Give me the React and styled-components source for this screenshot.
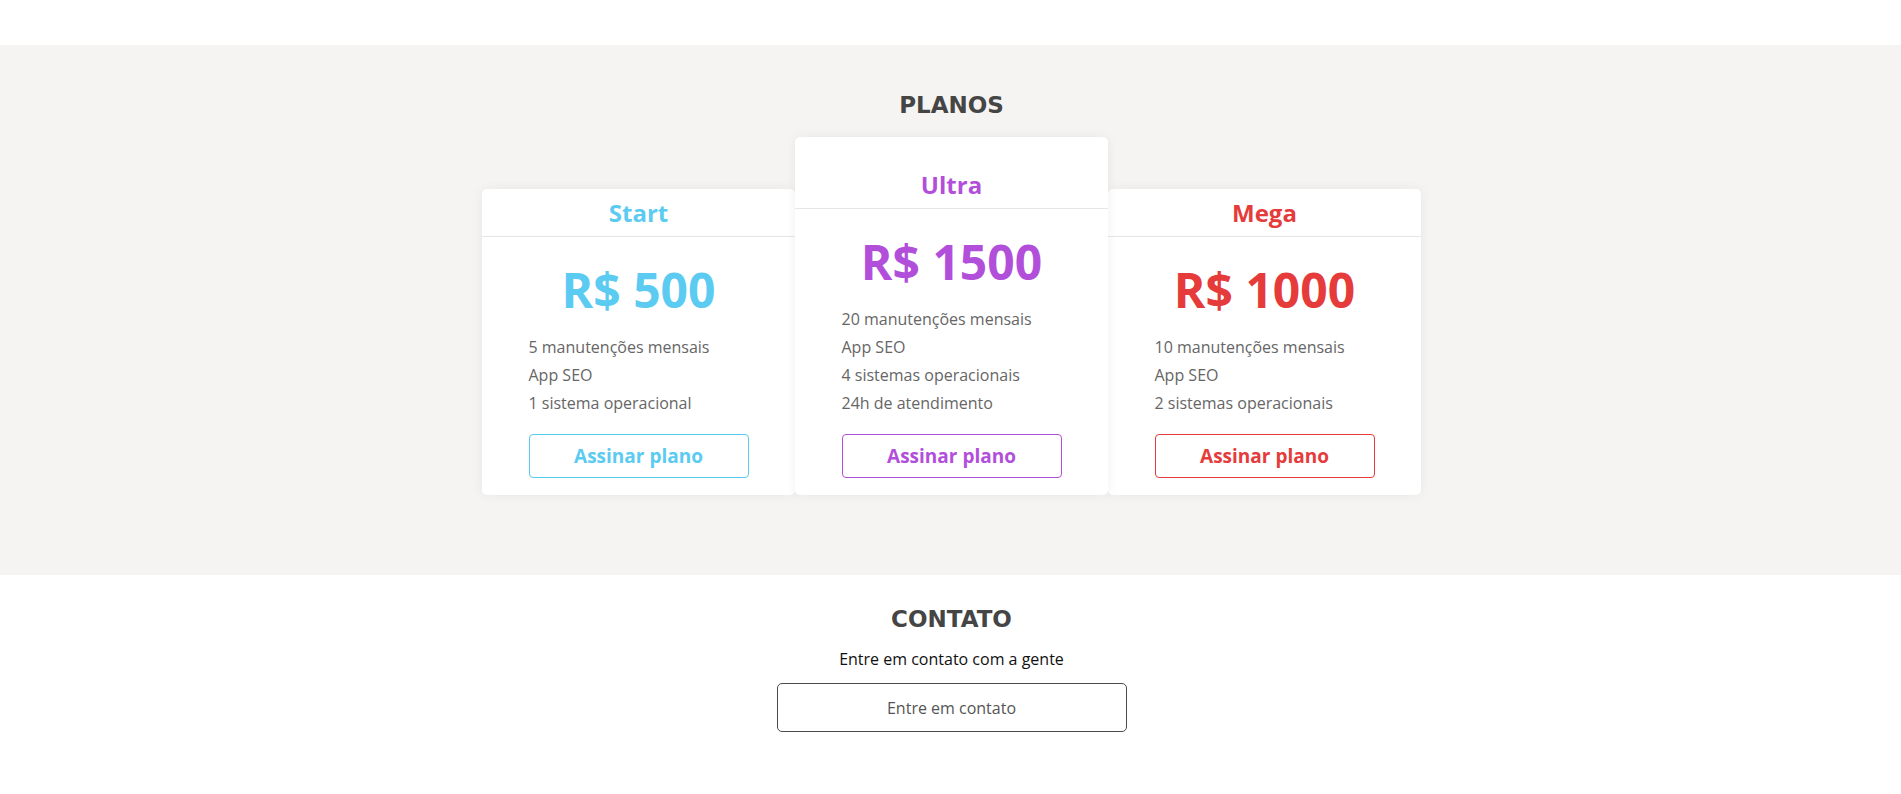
import styled, { createGlobalStyle } from "styled-components"

const GlobalStyle = createGlobalStyle`
    *{
        box-sizing: border-box;
    }
    body{
        margin: 0;
        background: #FFFFFF;
        font-family: "Open Sans", "Liberation Sans", sans-serif;
    }
`

const plans = [
    {
        name: "Start",
        price: "R$ 500",
        color: "#5BCBF1",
        items: ["5 manutenções mensais", "App SEO", "1 sistema operacional"],
    },
    {
        name: "Ultra",
        price: "R$ 1500",
        color: "#B24FDA",
        featured: true,
        items: ["20 manutenções mensais", "App SEO", "4 sistemas operacionais", "24h de atendimento"],
    },
    {
        name: "Mega",
        price: "R$ 1000",
        color: "#E53B3B",
        items: ["10 manutenções mensais", "App SEO", "2 sistemas operacionais"],
    },
]

export default function App(){
    return(
        <>
            <GlobalStyle/>
            <TopBar/>
            <Plans>
                <Title>PLANOS</Title>
                <CardRow>
                    {plans.map((plan) => (
                        <Card key={plan.name} featured={plan.featured}>
                            <CardHeader featured={plan.featured}>
                                <PlanName color={plan.color}>{plan.name}</PlanName>
                            </CardHeader>
                            <CardBody>
                                <Price color={plan.color}>{plan.price}</Price>
                                <Features>
                                    {plan.items.map((item) => (
                                        <li key={item}>{item}</li>
                                    ))}
                                </Features>
                                <PlanButton color={plan.color}>Assinar plano</PlanButton>
                            </CardBody>
                        </Card>
                    ))}
                </CardRow>
            </Plans>
            <Contact>
                <Title>CONTATO</Title>
                <p>Entre em contato com a gente</p>
                <ContactButton>Entre em contato</ContactButton>
            </Contact>
        </>
    )
}

const TopBar = styled.header`
    height: 45px;
    background: #FFFFFF;
`

const Plans = styled.section`
    background: #F5F4F2;
    padding: 46px 0 80px 2px;
    display: flex;
    flex-direction: column;
    align-items: center;
`

const Title = styled.h2`
    margin: 0;
    font-family: "DejaVu Sans", sans-serif;
    font-size: 23px;
    line-height: 28px;
    font-weight: 700;
    color: #454545;
`

const CardRow = styled.div`
    display: flex;
    align-items: flex-end;
    justify-content: center;
    margin-top: 18px;
`

const Card = styled.div`
    width: 313px;
    background: #FFFFFF;
    border-radius: 5px;
    box-shadow: 0 0 12px rgba(0, 0, 0, 0.06);
    position: relative;
    z-index: ${(p) => (p.featured ? 1 : 0)};
`

const CardHeader = styled.div`
    padding: ${(p) => (p.featured ? "31px" : "7px")} 0 7px;
    border-bottom: 1px solid #E6E6E6;
    text-align: center;
`

const PlanName = styled.h3`
    margin: 0;
    font-size: 24px;
    line-height: 33px;
    font-weight: 700;
    color: ${(p) => p.color};
`

const CardBody = styled.div`
    width: 220px;
    margin: 0 auto;
    padding: 20px 0 17px;
    display: flex;
    flex-direction: column;
`

const Price = styled.p`
    margin: 0;
    text-align: center;
    font-size: 48px;
    line-height: 65px;
    font-weight: 700;
    color: ${(p) => p.color};
`

const Features = styled.ul`
    list-style: none;
    margin: 11px 0 17px;
    padding: 0;

    li{
        font-size: 16px;
        line-height: 28px;
        color: #666666;
        white-space: nowrap;
    }
`

const PlanButton = styled.button`
    width: 100%;
    height: 44px;
    background: #FFFFFF;
    border: 1px solid ${(p) => p.color};
    border-radius: 4px;
    font-family: "Open Sans", sans-serif;
    font-size: 19px;
    font-weight: 700;
    color: ${(p) => p.color};
    cursor: pointer;
`

const Contact = styled.section`
    padding: 30px 0 60px 2px;
    display: flex;
    flex-direction: column;
    align-items: center;

    p{
        margin: 14px 0 12px;
        font-size: 16px;
        line-height: 24px;
        color: #111111;
    }
`

const ContactButton = styled.button`
    width: 350px;
    height: 49px;
    background: #FFFFFF;
    border: 1px solid #4A4A4A;
    border-radius: 5px;
    font-family: "Open Sans", sans-serif;
    font-size: 16px;
    color: #555555;
    cursor: pointer;
`
